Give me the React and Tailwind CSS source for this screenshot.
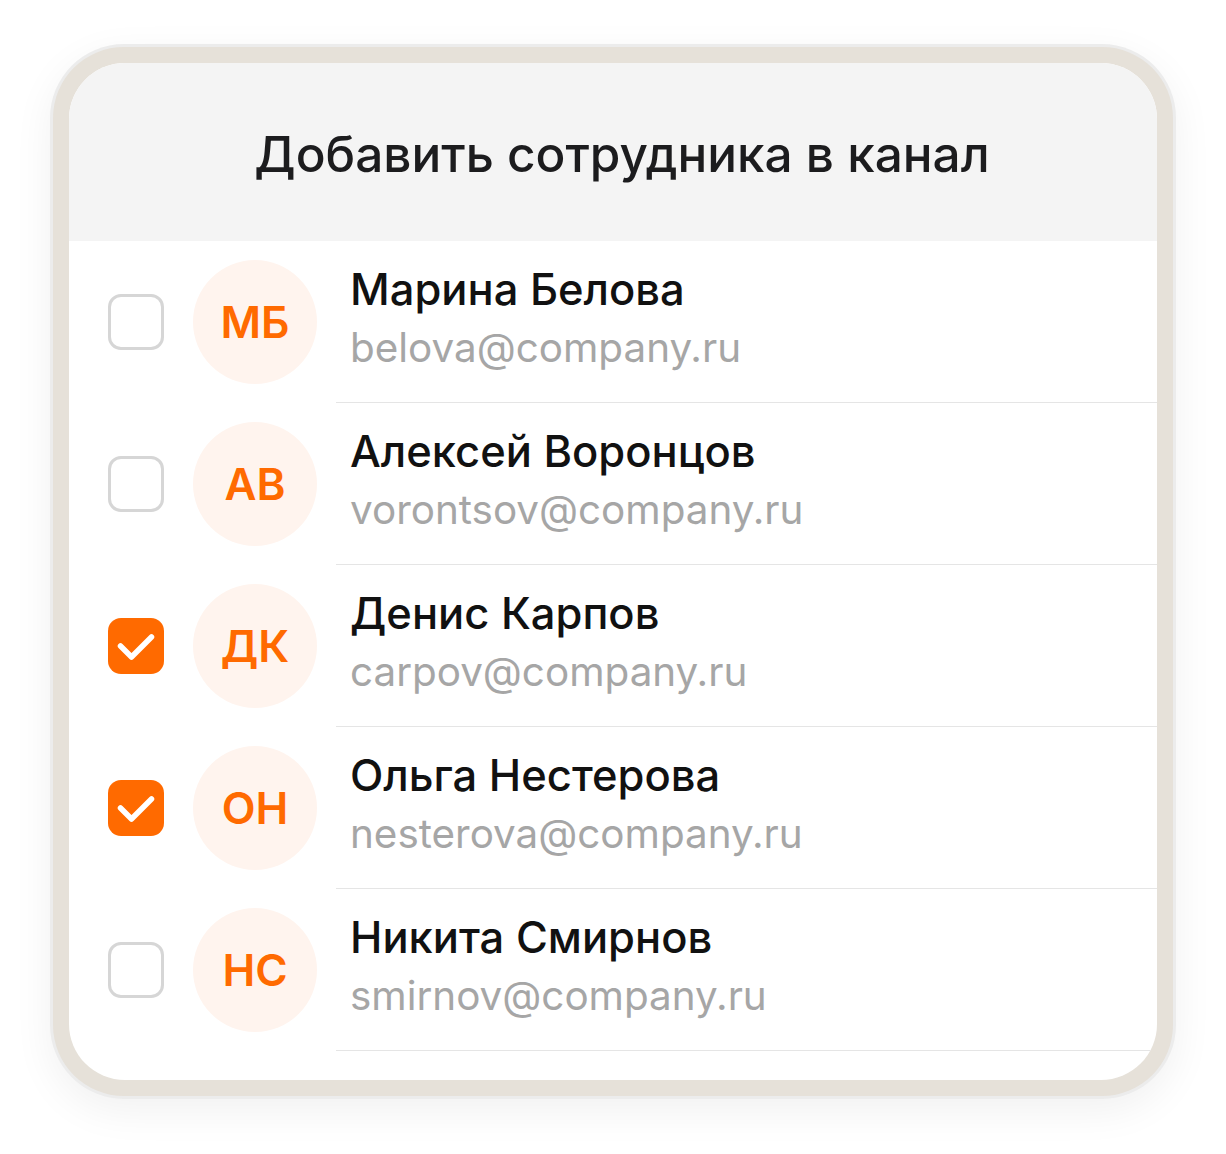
import React from 'react';

const people = [
  { initials: 'МБ', name: 'Марина Белова', email: 'belova@company.ru', checked: false },
  { initials: 'АВ', name: 'Алексей Воронцов', email: 'vorontsov@company.ru', checked: false },
  { initials: 'ДК', name: 'Денис Карпов', email: 'carpov@company.ru', checked: true },
  { initials: 'ОН', name: 'Ольга Нестерова', email: 'nesterova@company.ru', checked: true },
  { initials: 'НС', name: 'Никита Смирнов', email: 'smirnov@company.ru', checked: false },
];

function Checkbox({ checked }) {
  if (checked) {
    return (
      <div className="w-[56px] h-[56px] rounded-[13px] bg-[#ff6a00] shrink-0">
        <svg width="56" height="56" viewBox="0 0 56 56" fill="none">
          <path d="M12.5 28l11 11L43.5 19" stroke="white" strokeWidth="5.5" strokeLinecap="round" strokeLinejoin="round" />
        </svg>
      </div>
    );
  }
  return <div className="w-[56px] h-[56px] rounded-[13px] border-[3px] border-[#d6d6d6] bg-white shrink-0" />;
}

export default function App() {
  return (
    <div className="min-h-screen bg-white pt-[44px] px-[50px] font-['Inter',sans-serif]">
      <div className="rounded-[74px] bg-[#ececec] p-[3px] shadow-[0_12px_40px_rgba(0,0,0,0.06)]">
        <div className="rounded-[71px] bg-[#e6e1d9] p-[16px]">
          <div className="rounded-[56px] overflow-hidden bg-white pb-[29px]">
            <div className="h-[178px] bg-[#f4f4f4] flex items-center justify-center pl-[18px] pt-[3px]">
              <h1 className="text-[49.5px] leading-[58px] font-medium text-[#1c1c1e]">Добавить сотрудника в канал</h1>
            </div>
            {people.map((p) => (
              <div key={p.email} className="flex items-center h-[162px] pl-[39px]">
                <Checkbox checked={p.checked} />
                <div className="ml-[29px] w-[124px] h-[124px] rounded-full bg-[#fff4ee] flex items-center justify-center shrink-0">
                  <span className="text-[44px] font-semibold text-[#ff6a00]">{p.initials}</span>
                </div>
                <div className="ml-[19px] flex-1 self-stretch border-b border-[#e5e5e5] pl-[14px] pb-[7px] flex flex-col justify-center">
                  <div className="text-[43.5px] leading-[52px] font-medium text-[#111111]">{p.name}</div>
                  <div className="text-[40.4px] leading-[52px] mt-[7px] text-[#a6a6a6]">{p.email}</div>
                </div>
              </div>
            ))}
          </div>
        </div>
      </div>
    </div>
  );
}
